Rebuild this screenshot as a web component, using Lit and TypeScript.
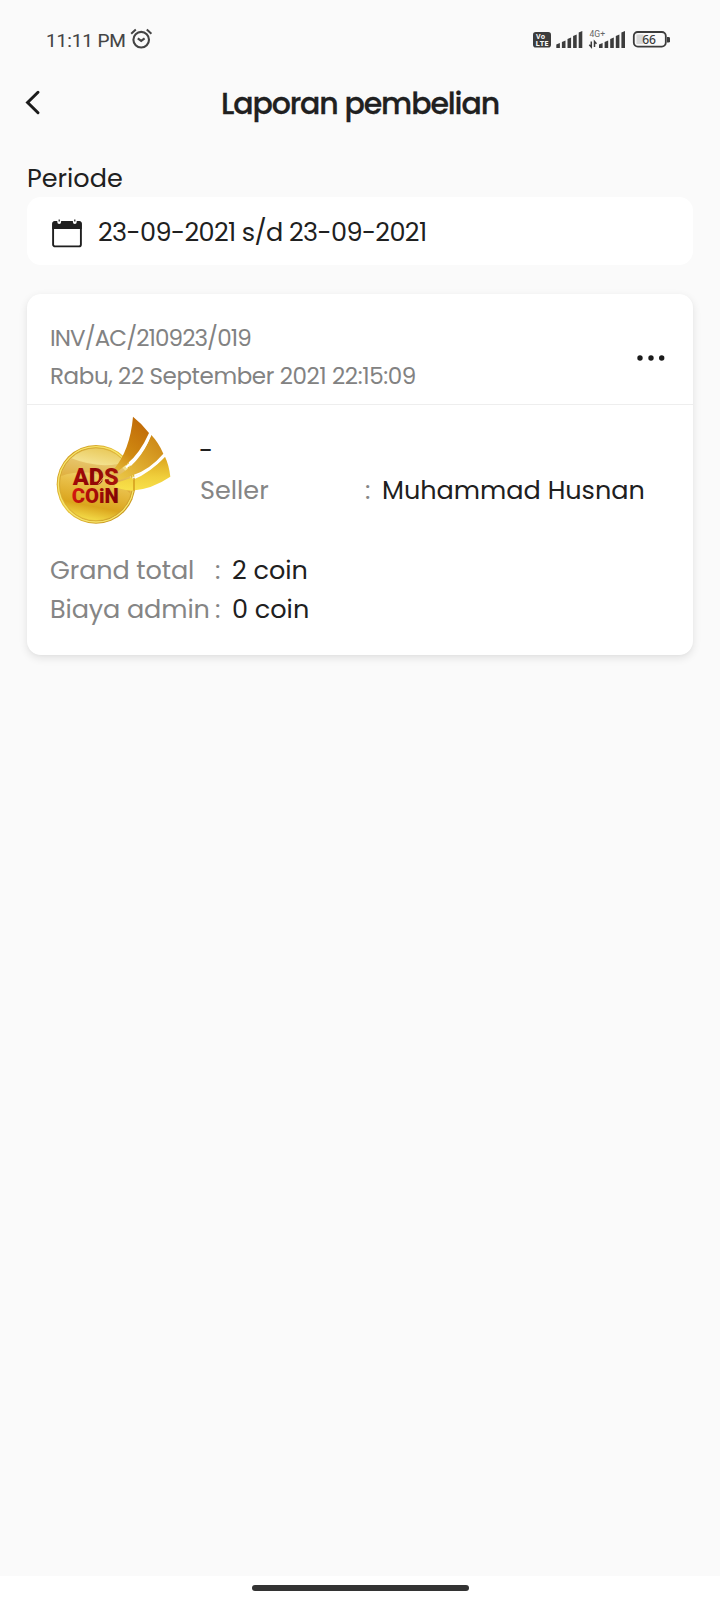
import { LitElement, html, css, svg } from "lit";
import { customElement } from "lit/decorators.js";

const bars = [5, 7.5, 10.5, 13.5, 17];

@customElement("status-bar")
class StatusBar extends LitElement {
  static styles = css`
    :host { display: flex; justify-content: space-between; height: 76px; padding: 28px 49px 0 46px; box-sizing: border-box; }
    .left, .right { display: flex; align-items: flex-start; }
    .time { font: 400 19px/25px Roboto, sans-serif; letter-spacing: -0.1px; color: #444; -webkit-text-stroke: 0.1px #444; white-space: nowrap; width: 84px; }
    svg { display: block; }
    .num { font: 500 12.5px "Noto Sans", sans-serif; }
    .tiny { font: 400 8.5px Roboto, sans-serif; fill: #666; }
    .volte { font: 700 7px "Noto Sans", sans-serif; }
  `;
  render() {
    return html`
      <div class="left">
        <span class="time">11:11 PM</span>
        <svg width="24" height="24" viewBox="130 28.500 24 24" fill="none" stroke="#444" stroke-width="2.100">
          <circle cx="141.2" cy="40.2" r="7.8" />
          <path d="M137.800 38.800l3.400 2.600L144.600 38.800" />
          <path d="M131.200 34.300l4.600-4.200M151.400 34.300l-4.600-4.200" stroke-width="2" />
        </svg>
      </div>
      <div class="right">
        <svg width="140" height="24" viewBox="531 27.500 140 24" fill="#3c3c3c">
          <rect x="533" y="31.500" width="18" height="15.500" rx="2.800" />
          <text class="volte" x="536" y="38.500" textLength="9" fill="#fafafa">Vo</text>
          <text class="volte" x="535.500" y="45.300" textLength="13" lengthAdjust="spacingAndGlyphs" fill="#fafafa">LTE</text>
          ${bars.map((h, i) => svg`<path d="M${556.3 + i * 5.6} 47.500v${1.5 - h}l3.600-1.500v${h}z" />`)}
          <text class="tiny" x="589.500" y="36" textLength="15.500" lengthAdjust="spacingAndGlyphs">4G+</text>
          <path d="M591.300 41v5.500l-2-2.300M594.500 46.500v-5.500l2 2.300" fill="none" stroke="#3c3c3c" stroke-width="1.500" />
          ${bars.map((h, i) => svg`<path d="M${599 + i * 5.6} 47.500v${1.5 - h}l3.600-1.500v${h}z" />`)}
          <rect x="633.800" y="31.500" width="32" height="14.600" rx="4" fill="none" stroke="#3c3c3c" stroke-width="1.800" />
          <rect x="636.500" y="34" width="7" height="9.500" fill="#d8d8d8" />
          <path d="M667 36.500h1.500q1.500 0 1.500 1.200v3q0 1.200-1.500 1.200H667z" />
          <text class="num" x="642.200" y="43.500" textLength="13.800" lengthAdjust="spacingAndGlyphs">66</text>
        </svg>
      </div>`;
  }
}

@customElement("ads-coin")
class AdsCoin extends LitElement {
  static styles = css`
    :host { display: block; width: 118px; height: 111px; }
    svg { display: block; }
    .logo { font-family: Roboto, "Open Sans", sans-serif; font-weight: 900; }
  `;
  render() {
    return html`<svg width="118" height="111" viewBox="45 42 354 333">
      <defs>
        <linearGradient id="rim" x1="0" y1="0" x2="1" y2="1"><stop offset="0" stop-color="#c58a12" /><stop offset=".45" stop-color="#e8c23a" /><stop offset="1" stop-color="#bb8410" /></linearGradient>
        <linearGradient id="face" x1="0.600" y1="0" x2="0.400" y2="1"><stop offset="0" stop-color="#e9c95a" /><stop offset=".22" stop-color="#f3e08c" /><stop offset=".5" stop-color="#e9c04a" /><stop offset=".8" stop-color="#dba51d" /><stop offset="1" stop-color="#f5df4b" /></linearGradient>
        <linearGradient id="red" x1="0" y1="0" x2="1" y2="0.300"><stop offset="0" stop-color="#b80f0c" /><stop offset=".5" stop-color="#8d0505" /><stop offset="1" stop-color="#a5140a" /></linearGradient>
        <linearGradient id="redLow" x1="0" y1="0" x2="1" y2="0.200"><stop offset="0" stop-color="#e01a10" /><stop offset=".5" stop-color="#a80d08" /><stop offset="1" stop-color="#850404" /></linearGradient>
        <linearGradient id="f1" x1="0.700" y1="0" x2="0.200" y2="1"><stop offset="0" stop-color="#c06a08" /><stop offset=".6" stop-color="#d08a12" /><stop offset="1" stop-color="#e6bd38" /></linearGradient>
        <linearGradient id="f2" x1="1" y1="0" x2="0" y2="1"><stop offset="0" stop-color="#c98212" /><stop offset=".5" stop-color="#dda72b" /><stop offset="1" stop-color="#edcf4e" /></linearGradient>
        <linearGradient id="f3" x1="0.800" y1="0" x2="0.700" y2="1"><stop offset="0" stop-color="#dca51f" /><stop offset=".6" stop-color="#f0cf3c" /><stop offset="1" stop-color="#f8e04a" /></linearGradient>
      </defs>
      <circle cx="168" cy="253" r="118" fill="url(#rim)" />
      <circle cx="168" cy="253" r="113" fill="none" stroke="#f6e36b" stroke-width="4" />
      <circle cx="168" cy="253" r="109" fill="url(#face)" stroke="#d3a534" stroke-width="1.500" />
      <path d="M64 228Q72 195 94 175Q170 205 235 192L270 225Q274 250 270 280Q170 190 64 228Z" fill="#c9861f" opacity=".3" />
      <path d="M222 207Q270 150 279 50Q305 70 327 99Q300 160 260 193Q240 210 215 228Z" fill="url(#f1)" />
      <path d="M215 238Q300 195 334 105Q356 128 370 161Q330 208 280 225Q245 240 215 247Z" fill="url(#f2)" />
      <path d="M225 249Q330 220 375 170Q387 195 391 230Q335 268 275 272Q245 269 225 260Z" fill="url(#f3)" />
      <path d="M258 202Q305 168 331 103" fill="none" stroke="#fff" stroke-width="7" />
      <path d="M278 236Q330 214 373 167" fill="none" stroke="#fff" stroke-width="7" />
      <path d="M282 233V272" stroke="#cf9417" stroke-width="4" />
      <text class="logo" x="98" y="254" font-size="71" textLength="138" lengthAdjust="spacingAndGlyphs" fill="url(#red)">ADS</text>
      <path d="M176 251L193 230L189 243L202 230" fill="none" stroke="#edc95b" stroke-width="3" />
      <text class="logo" x="95" y="308" font-size="62" textLength="141" lengthAdjust="spacingAndGlyphs" fill="url(#redLow)">COiN</text>
    </svg>`;
  }
}

@customElement("app-root")
class AppRoot extends LitElement {
  static styles = css`
    :host { display: flex; flex-direction: column; height: 1600px; background: #fafafa; color: #202020; font-family: Poppins, Inter, sans-serif; font-size: 25.5px; font-weight: 400; line-height: 38px; white-space: nowrap; overflow: hidden; }
    svg { display: block; }
    .appbar { display: grid; grid-template-columns: 60px 1fr 60px; align-items: center; height: 54px; }
    .back { margin-left: 24px; }
    h1 { margin: 2px 0 0; text-align: center; font-size: 30px; line-height: 40px; font-weight: 500; }
    .title { letter-spacing: -1.1px; -webkit-text-stroke: 0.3px #202020; }
    main { flex: 1; padding: 0 27px; }
    .label { padding-top: 29px; height: 38px; }
    .field { display: flex; align-items: center; height: 68px; padding-left: 25px; box-sizing: border-box; border-radius: 14px; background: #fff; }
    .field svg { margin-top: 4px; }
    .date { margin: 1px 0 0 15px; letter-spacing: -0.58px; }
    .card { margin-top: 29px; height: 361px; border-radius: 14px; background: #fff; box-shadow: 0 3px 8px rgba(0,0,0,.1), 0 1px 3px rgba(0,0,0,.02); }
    .head { display: flex; align-items: center; justify-content: space-between; height: 111px; padding: 15px 27px 0 23px; border-bottom: 1px solid #eee; box-sizing: border-box; color: #828282; font-size: 23px; }
    .head svg { margin-top: 3px; }
    .inv { letter-spacing: -0.9px; }
    .day { letter-spacing: -0.4px; }
    .body { display: grid; grid-template-columns: 118px 1fr; column-gap: 26px; padding: 9px 23px 0 28px; height: 140px; box-sizing: border-box; }
    .info { padding-top: 17px; }
    .row { display: flex; height: 39px; line-height: 39px; }
    .info .row { height: 40px; }
    .muted { color: #858585; }
    .k1 { width: 165px; padding-left: 1px; }
    .k2 { width: 165px; letter-spacing: -0.1px; }
    .colon { width: 17px; color: #858585; }
    .totals { padding: 6px 23px 0; }
    .nav { display: flex; justify-content: center; height: 24px; padding-top: 9px; box-sizing: border-box; background: #fff; }
    .pill { width: 217px; height: 6px; border-radius: 3px; background: #333; }
  `;
  render() {
    return html`
      <status-bar></status-bar>
      <header class="appbar">
        <svg class="back" width="18" height="26" viewBox="24 90 18 26" fill="none" stroke="#1b1b1b" stroke-width="3" stroke-linecap="round"><path d="M38 92.300L27.600 102.500L38 112.700" /></svg>
        <h1><span class="title">Laporan pembelian</span></h1>
      </header>
      <main>
        <div class="label">Periode</div>
        <div class="field">
          <svg width="31" height="29" viewBox="0 0 31 29">
            <rect x="1.100" y="3.500" width="27.800" height="23.900" rx="2" fill="none" stroke="#1f1f1f" stroke-width="1.900" />
            <path d="M.3 10V4.500Q.3 2 2.800 2H27.200Q29.700 2 29.700 4.500V10Z" fill="#1f1f1f" />
            <path d="M7.200 0V3M22.800 0V3" stroke="#fff" stroke-width="3.800" stroke-linecap="round" />
            <path d="M7.200 .5V2.500M22.800 .5V2.500" stroke="#1f1f1f" stroke-width="1.200" />
          </svg>
          <span class="date">23-09-2021 s/d 23-09-2021</span>
        </div>
        <section class="card">
          <div class="head">
            <div><div class="inv">INV/AC/210923/019</div><div class="day">Rabu, 22 September 2021 22:15:09</div></div>
            <svg width="30" height="8" viewBox="0 0 30 8" fill="#1b1b1b"><circle cx="4" cy="4" r="2.700" /><circle cx="15" cy="4" r="2.700" /><circle cx="25.700" cy="4" r="2.700" /></svg>
          </div>
          <div class="body">
            <ads-coin></ads-coin>
            <div class="info">
              <div class="row">-</div>
              <div class="row"><span class="k1 muted">Seller</span><span class="colon">:</span><span>Muhammad Husnan</span></div>
            </div>
          </div>
          <div class="totals">
            <div class="row"><span class="k2 muted">Grand total</span><span class="colon">:</span><span>2 coin</span></div>
            <div class="row"><span class="k2 muted">Biaya admin</span><span class="colon">:</span><span>0 coin</span></div>
          </div>
        </section>
      </main>
      <footer class="nav"><div class="pill"></div></footer>`;
  }
}
